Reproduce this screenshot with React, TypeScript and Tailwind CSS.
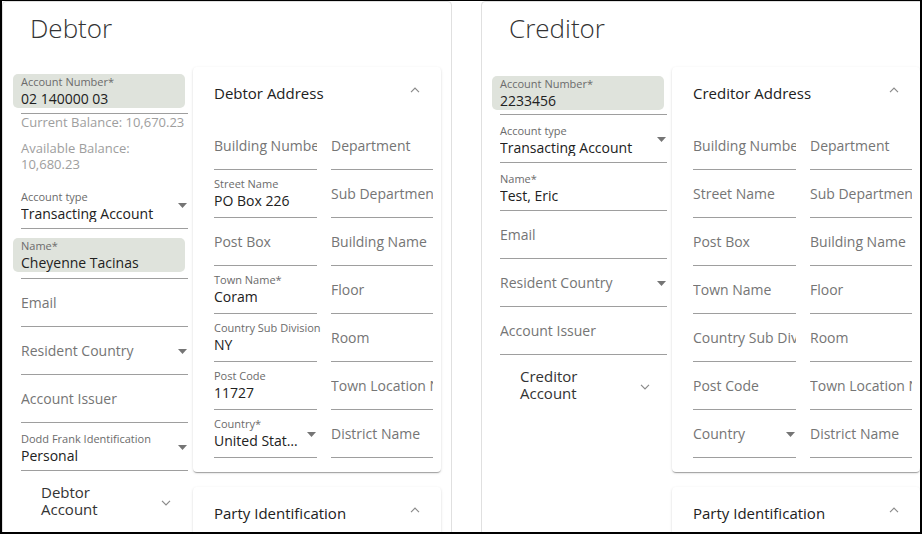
import type { ReactNode } from 'react';

// Payment parties screen: a Debtor panel and a Creditor panel side by side,
// each with an account column on the left and collapsible address cards.

type FieldProps = {
  label?: string;
  value?: string;
  placeholder?: string;
  select?: boolean;
  raised?: boolean;
  className?: string;
};

function Caret({ className = '' }: { className?: string }) {
  return (
    <svg width="9" height="5" viewBox="0 0 9 5" className={className} aria-hidden>
      <path d="M0 0h9L4.5 5z" fill="#757575" />
    </svg>
  );
}

function Chevron({ up }: { up?: boolean }) {
  return (
    <svg width="10" height="6" viewBox="0 0 10 6" aria-hidden>
      <path d={up ? 'M1 5.2L5 1.2l4 4' : 'M1 0.8l4 4 4-4'} fill="none" stroke="#8a8a8a" strokeWidth="1.2" />
    </svg>
  );
}

// Underlined text field. Placeholder fields show grey text; filled ones show a
// small label above the value.
function Field({ label, value, placeholder, select, raised, className = '' }: FieldProps) {
  return (
    <div className={`relative flex h-[48px] flex-col justify-end border-b border-[#9e9e9e] ${className}`}>
      {value !== undefined ? (
        <div className={raised ? 'pb-[8px]' : 'pb-[6px]'}>
          <div className="mb-[2px] whitespace-nowrap text-[11px] leading-[13px] text-[#6b6b6b]">{label}</div>
          <div className={`overflow-hidden whitespace-nowrap text-[14px] leading-[17px] text-[#212121] ${select ? 'truncate pr-[16px]' : ''}`}>
            {value}
          </div>
        </div>
      ) : (
        <div className="overflow-hidden whitespace-nowrap pb-[15px] text-[14px] leading-[17px] text-[#757575]">{placeholder}</div>
      )}
      {select && <Caret className="absolute bottom-[20px] right-[1px]" />}
    </div>
  );
}

function FilledField({ label, value, gap }: { label: string; value: string; gap: string }) {
  return (
    <>
      <div className="h-[34px] w-[172px] rounded-[5px] bg-[#dfe3dc] px-[8px] pt-[1px]">
        <div className="text-[11px] leading-[13px] text-[#6b6b6b]">{label}</div>
        <div className="mt-[2px] text-[14px] leading-[17px] text-[#212121]">{value}</div>
      </div>
      <div className={`ml-[8px] h-px bg-[#9e9e9e] ${gap}`} />
    </>
  );
}

function Card({ title, children, className = '' }: { title: string; children?: ReactNode; className?: string }) {
  return (
    <div
      className={`w-[248px] rounded-[4px] bg-white pl-[21px] pr-[8px] pt-[17px] shadow-[0_2px_1px_-1px_rgba(0,0,0,0.2),0_1px_1px_0_rgba(0,0,0,0.14),0_1px_3px_0_rgba(0,0,0,0.12)] ${className}`}
    >
      <div className="flex h-[18px] items-center justify-between pr-[13px]">
        <span className="text-[15px] leading-[18px] text-[#212121]">{title}</span>
        <span className="-mt-[7px]">
          <Chevron up />
        </span>
      </div>
      {children}
    </div>
  );
}

type Cell = FieldProps;

function AddressCard({ title, left, right }: { title: string; left: Cell[]; right: Cell[] }) {
  return (
    <Card title={title} className="pb-[14px]">
      <div className="mt-[20px] grid grid-cols-[103px_102px] gap-x-[14px]">
        <div className="flex flex-col">
          {left.map((c, i) => (
            <Field key={i} raised {...c} />
          ))}
        </div>
        <div className="flex flex-col">
          {right.map((c, i) => (
            <Field key={i} raised {...c} />
          ))}
        </div>
      </div>
    </Card>
  );
}

const rightCol: Cell[] = [
  { placeholder: 'Department' },
  { placeholder: 'Sub Department' },
  { placeholder: 'Building Name' },
  { placeholder: 'Floor' },
  { placeholder: 'Room' },
  { placeholder: 'Town Location Name' },
  { placeholder: 'District Name' },
];

function AccountToggle({ text }: { text: string }) {
  return (
    <div className="mt-[13px] flex items-center justify-between pl-[28px] pr-[17px]">
      <div className="w-[70px] text-[15px] leading-[17px] text-[#333]">{text}</div>
      <span className="mt-[3px]">
        <Chevron />
      </span>
    </div>
  );
}

function Panel({ title, column, card, ml }: { title: string; column: ReactNode; card: ReactNode; ml: string }) {
  return (
    <section className={`flex h-[560px] w-[450px] flex-none flex-col rounded-[4px] border border-[#e0e0e0] bg-white ${ml}`}>
      <h1 className="mt-[10px] pl-[27px] text-[26px] font-light leading-[32px] text-[#333]">{title}</h1>
      <div className="mt-[23px] flex gap-[5px] pl-[10px]">
        <div className="flex w-[175px] flex-none flex-col">{column}</div>
        <div className="flex flex-col gap-[15px]">
          {card}
          <Card title="Party Identification" className="h-[60px]" />
        </div>
      </div>
    </section>
  );
}

export default function App() {
  const debtorColumn = (
    <>
      <div className="mt-[7px]" />
      <FilledField label="Account Number*" value="02 140000 03" gap="mt-[5px]" />
      <div className="whitespace-nowrap pl-[8px] text-[13px] leading-[16px] text-[#9e9e9e]">
        <div>Current Balance: 10,670.23</div>
        <div className="mt-[10px]">Available Balance:</div>
        <div>10,680.23</div>
      </div>
      <Field className="ml-[8px] mt-[9px]" label="Account type" value="Transacting Account" select />
      <div className="mt-[9px]" />
      <FilledField label="Name*" value="Cheyenne Tacinas" gap="mt-[6px]" />
      <Field className="ml-[8px]" placeholder="Email" />
      <Field className="ml-[8px]" placeholder="Resident Country" select />
      <Field className="ml-[8px]" placeholder="Account Issuer" />
      <Field className="ml-[8px]" label="Dodd Frank Identification" value="Personal" select />
      <AccountToggle text="Debtor Account" />
    </>
  );

  const creditorColumn = (
    <>
      <div className="mt-[9px]" />
      <FilledField label="Account Number*" value="2233456" gap="mt-[4px]" />
      <Field className="ml-[8px]" label="Account type" value="Transacting Account" select />
      <Field className="ml-[8px]" label="Name*" value="Test, Eric" />
      <Field className="ml-[8px]" placeholder="Email" />
      <Field className="ml-[8px]" placeholder="Resident Country" select />
      <Field className="ml-[8px]" placeholder="Account Issuer" />
      <AccountToggle text="Creditor Account" />
    </>
  );

  return (
    <div className="h-[534px] w-[922px] overflow-hidden border-b-2 border-l-2 border-r-2 border-t border-black bg-white font-['Open_Sans',sans-serif]">
      <div className="flex">
        <Panel
          title="Debtor"
          ml=""
          column={debtorColumn}
          card={
            <AddressCard
              title="Debtor Address"
              left={[
                { placeholder: 'Building Number' },
                { label: 'Street Name', value: 'PO Box 226' },
                { placeholder: 'Post Box' },
                { label: 'Town Name*', value: 'Coram' },
                { label: 'Country Sub Division', value: 'NY' },
                { label: 'Post Code', value: '11727' },
                { label: 'Country*', value: 'United States', select: true },
              ]}
              right={rightCol}
            />
          }
        />
        <Panel
          title="Creditor"
          ml="ml-[29px]"
          column={creditorColumn}
          card={
            <AddressCard
              title="Creditor Address"
              left={[
                { placeholder: 'Building Number' },
                { placeholder: 'Street Name' },
                { placeholder: 'Post Box' },
                { placeholder: 'Town Name' },
                { placeholder: 'Country Sub Division' },
                { placeholder: 'Post Code' },
                { placeholder: 'Country', select: true },
              ]}
              right={rightCol}
            />
          }
        />
      </div>
    </div>
  );
}
